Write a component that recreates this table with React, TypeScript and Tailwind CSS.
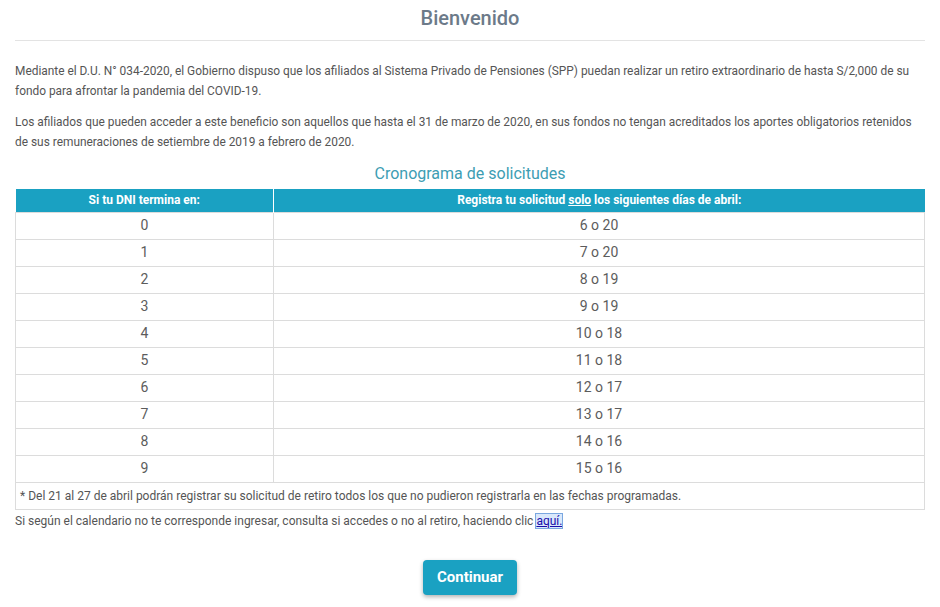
import React from "react";

const rows: [string, string][] = [
  ["0", "6 o 20"],
  ["1", "7 o 20"],
  ["2", "8 o 19"],
  ["3", "9 o 19"],
  ["4", "10 o 18"],
  ["5", "11 o 18"],
  ["6", "12 o 17"],
  ["7", "13 o 17"],
  ["8", "14 o 16"],
  ["9", "15 o 16"],
];

export default function App() {
  return (
    <div
      className="w-[940px] h-[607px] bg-white px-[15px] text-[#555]"
      style={{ fontFamily: "Roboto, 'Liberation Sans', sans-serif" }}
    >
      <h1 className="pt-[6px] h-[40px] text-center text-[20px] leading-[24px] font-medium text-[#6c7a89]">
        Bienvenido
      </h1>
      <div className="h-px bg-[#e3e3e3]" />
      <p className="mt-[20px] text-[11.9px] leading-[20px]">
        Mediante el D.U. N° 034-2020, el Gobierno dispuso que los afiliados al Sistema Privado de Pensiones (SPP) puedan realizar un retiro extraordinario de hasta S/2,000 de su fondo para afrontar la pandemia del COVID-19.
      </p>
      <p className="mt-[11px] text-[11.9px] leading-[20px]">
        Los afiliados que pueden acceder a este beneficio son aquellos que hasta el 31 de marzo de 2020, en sus fondos no tengan acreditados los aportes obligatorios retenidos de sus remuneraciones de setiembre de 2019 a febrero de 2020.
      </p>
      <h2 className="mt-[11px] text-center text-[16px] leading-[22px] text-[#3d9db3]">
        Cronograma de solicitudes
      </h2>
      <table className="mt-[4px] w-full border-collapse">
        <thead>
          <tr className="bg-[#1aa1c2] text-white text-[12px] font-bold h-[23px]">
            <th className="w-[258px] border-r border-white p-0">Si tu DNI termina en:</th>
            <th className="p-0">
              Registra tu solicitud <span className="underline">solo</span> los siguientes días de abril:
            </th>
          </tr>
        </thead>
        <tbody>
          {rows.map(([a, b]) => (
            <tr key={a} className="h-[27px] text-[14px] text-[#5c5c5c]">
              <td className="border border-[#dcdcdc] text-center p-0">{a}</td>
              <td className="border border-[#dcdcdc] text-center p-0">{b}</td>
            </tr>
          ))}
          <tr className="h-[27px] text-[12px]">
            <td colSpan={2} className="border border-[#dcdcdc] px-[4px] p-0">
              * Del 21 al 27 de abril podrán registrar su solicitud de retiro todos los que no pudieron registrarla en las fechas programadas.
            </td>
          </tr>
        </tbody>
      </table>
      <p className="mt-[2px] text-[12px] leading-[18px]">
        Si según el calendario no te corresponde ingresar, consulta si accedes o no al retiro, haciendo clic{" "}
        <a className="text-[#1a0dab] underline bg-[#d9e8fb] outline outline-1 outline-[#7aa7e0]">aquí.</a>
      </p>
      <div className="mt-[30px] flex justify-center">
        <button className="w-[94px] h-[35px] rounded-[4px] bg-[#1aa1c2] text-white text-[15px] font-bold shadow-[0_2px_4px_rgba(0,0,0,0.3)]">
          Continuar
        </button>
      </div>
    </div>
  );
}
